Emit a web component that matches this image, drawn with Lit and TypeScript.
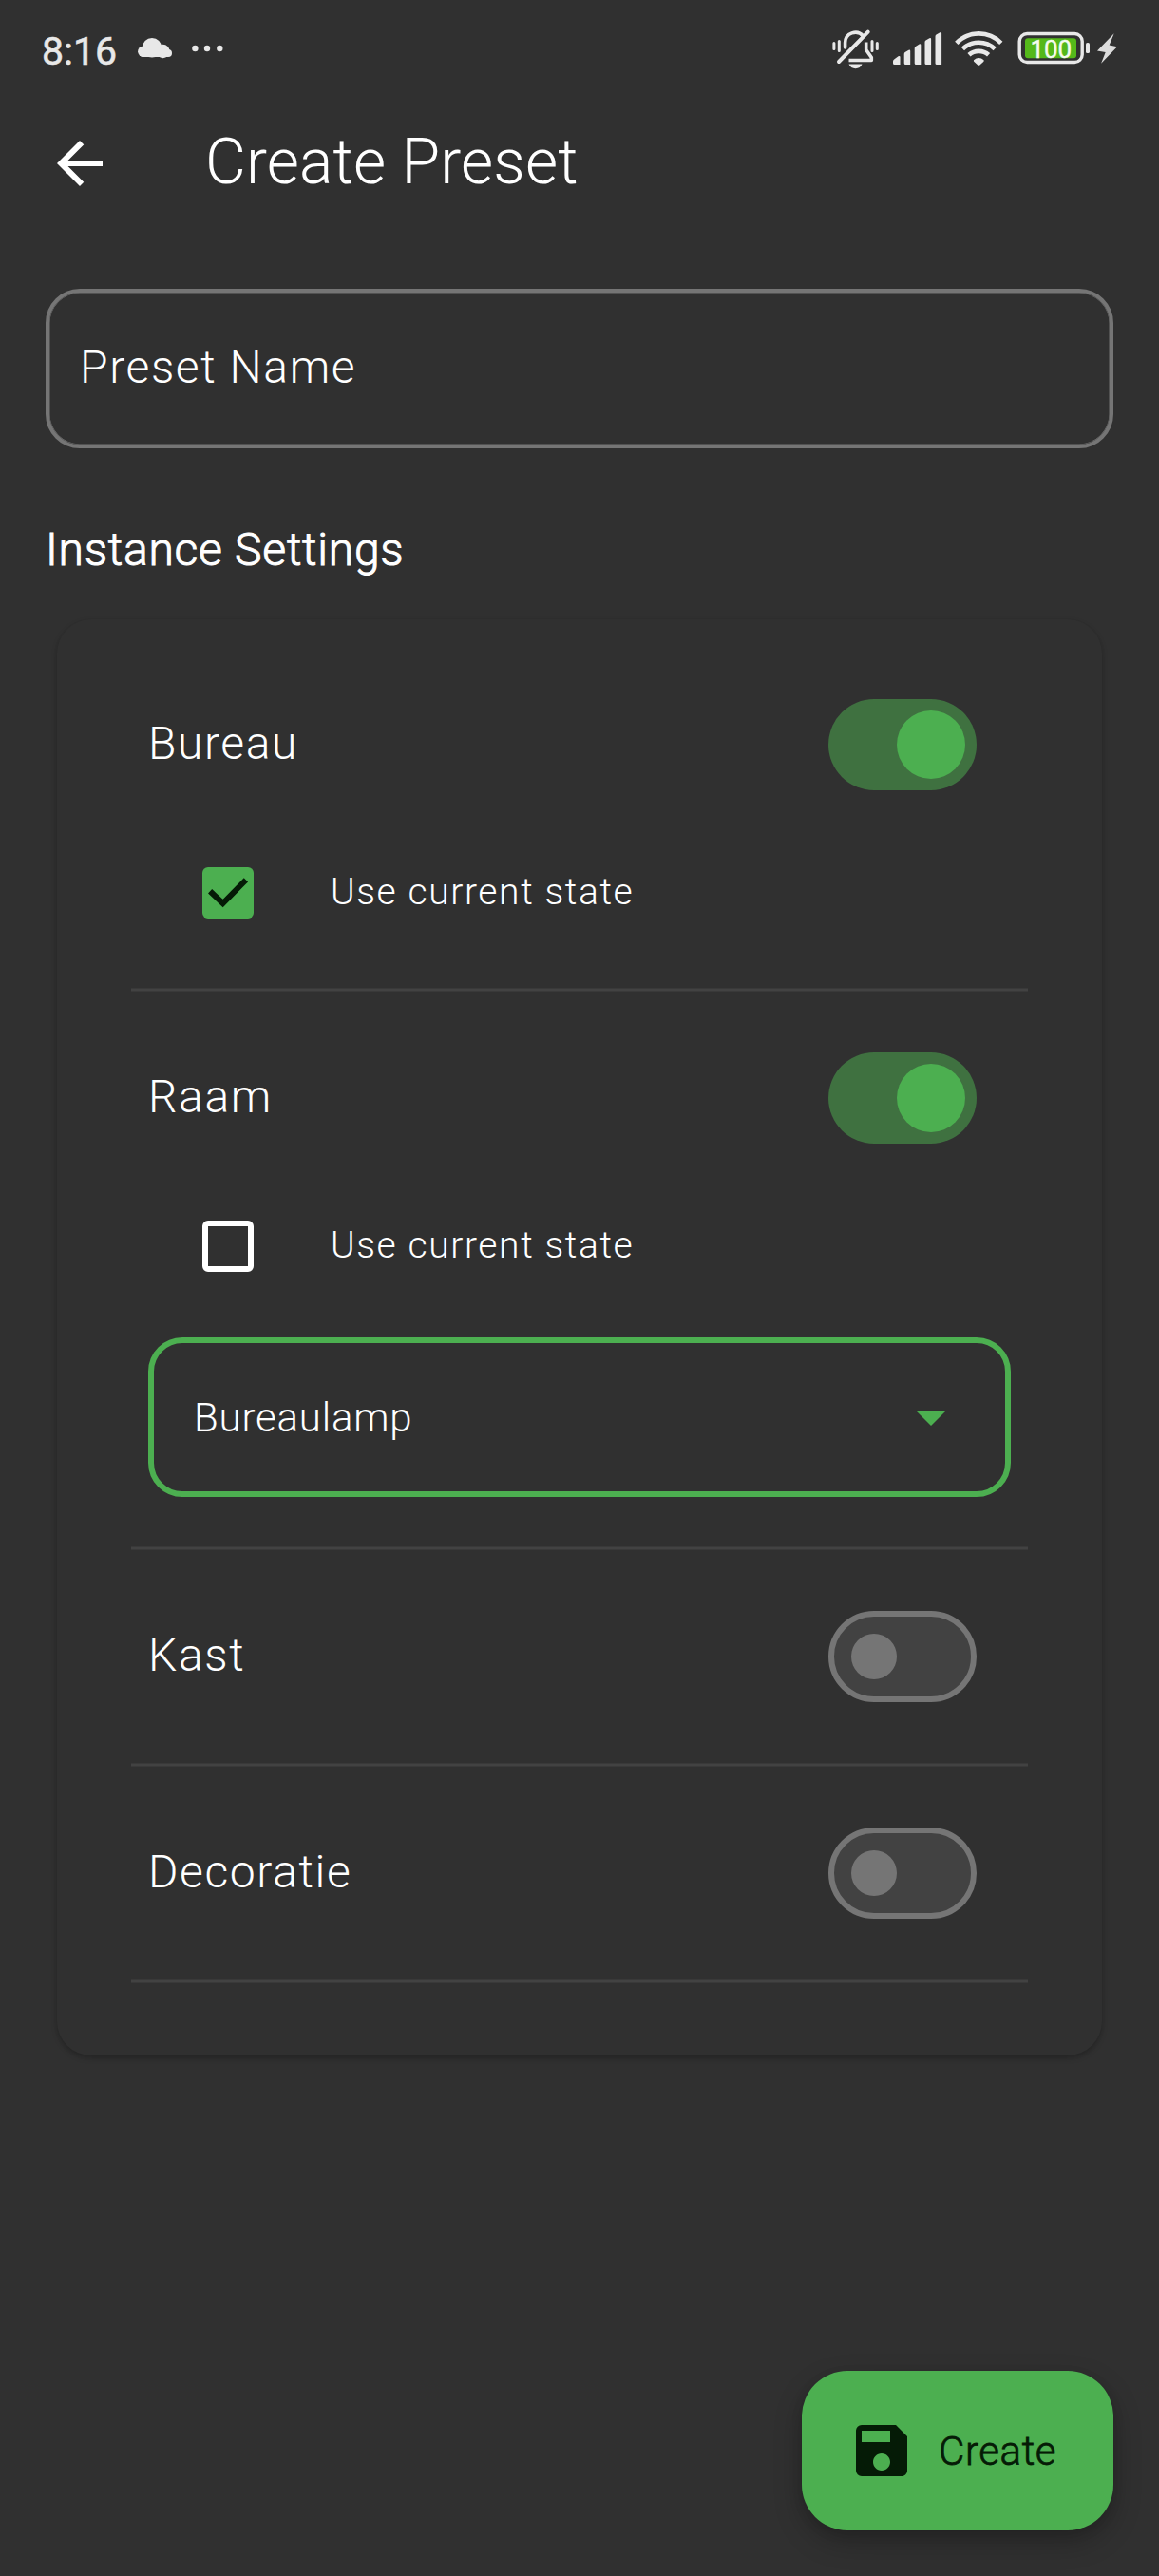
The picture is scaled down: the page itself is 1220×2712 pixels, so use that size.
import { LitElement, html, css, svg, nothing } from "lit";
import { customElement, property, state } from "lit/decorators.js";
import { classMap } from "lit/directives/class-map.js";

interface Instance {
  name: string;
  enabled: boolean;
  useCurrent?: boolean;
  preset?: string;
}

@customElement("status-bar")
class StatusBar extends LitElement {
  static styles = css`
    :host {
      display: flex;
      align-items: flex-start;
      height: 100px;
      padding-left: 44px;
      box-sizing: border-box;
      color: #e8e8e8;
    }
    .time {
      font-size: 41px;
      font-weight: 400;
      line-height: 48px;
      width: 88px;
      margin-top: 30px;
      white-space: nowrap;
      -webkit-text-stroke: 0.6px currentColor;
    }
    svg {
      display: block;
      flex: none;
    }
    .system {
      margin-left: auto;
    }
    .level {
      font-size: 26px;
      font-weight: 400;
      font-family: Roboto, "Liberation Sans", sans-serif;
      stroke: #f4fbef;
      stroke-width: 0.4px;
    }
  `;

  render() {
    return html`
      <div class="time">8:16</div>
      <svg width="120" height="90" viewBox="132 0 120 90">
        <g fill="#e8e8e8">
          <circle cx="160" cy="50.3" r="10.3" />
          <circle cx="150.8" cy="54.2" r="5.7" />
          <circle cx="171.5" cy="54" r="7.2" />
          <rect x="147" y="52" width="34" height="7.9" rx="3.9" />
          <circle cx="205.4" cy="51" r="3.2" />
          <circle cx="218" cy="51" r="3.2" />
          <circle cx="231.3" cy="51" r="3.2" />
        </g>
      </svg>
      <svg class="system" width="360" height="90" viewBox="860 0 360 90">
        <g fill="none" stroke="#e8e8e8" stroke-linecap="round" stroke-linejoin="round">
          <path stroke-width="3.6" d="M889.6 50V45a10.8 10.8 0 0 1 19-7" />
          <path stroke-width="4" d="M913.7 33.6 883 65" />
          <path stroke-width="3.6" stroke-linecap="butt" d="M911.7 44.5V52.5L917.3 60.6V63.5H893.5" />
          <path stroke-width="3" d="M877.9 45.5v6M883.3 43.5v10M918 43.5v10M923.3 45.5v6" />
        </g>
        <path fill="#e8e8e8" d="M893.5 67.6h14c-1.2 3-3.7 4.6-7 4.6s-5.8-1.6-7-4.6z" />
        <g fill="#e8e8e8">
          <path d="M940 64.5q0-1.5 1.5-2.2l4-3q2-.8 2 .7V68h-6q-1.5 0-1.5-1.5z" />
          <path d="M951.7 57q0-1.5 1-2l3.8-2.3q1.7-.6 1.7 1V68h-5q-1.5 0-1.5-1.5z" />
          <path d="M962.7 51q0-1.5 1-2l3.9-2.5q1.7-.6 1.7 1V68h-5.1q-1.5 0-1.5-1.5z" />
          <path d="M973.5 44.5q0-1.5 1-2l3.9-2.3q1.7-.6 1.7 1V68h-5.1q-1.5 0-1.5-1.5z" />
          <path d="M984.5 38.5q0-1.5 1-2l3.9-2.3q1.7-.6 1.7 1V68h-5.1q-1.5 0-1.5-1.5z" />
        </g>
        <g fill="none" stroke="#e8e8e8" stroke-width="4.7">
          <path d="M1006.8 45.3a33 33 0 0 1 47 0" />
          <path d="M1013.4 51.5a24.5 24.5 0 0 1 33.8 0" />
          <path d="M1020 57.7a15.5 15.5 0 0 1 20.6 0" />
        </g>
        <path fill="#e8e8e8" d="M1025 63.2q5.3-4.4 10.6 0 .4 1-.4 1.7l-3.6 3.4q-1.3 1-2.6 0l-3.6-3.4q-.8-.7-.4-1.7z" />
        <rect x="1073.2" y="35.5" width="66" height="30" rx="8" fill="none" stroke="#e8e8e8" stroke-width="3.4" />
        <rect x="1079" y="40.3" width="54" height="21" rx="3" fill="#54b81a" />
        <rect x="1143" y="45" width="4" height="11" rx="1.6" fill="#e8e8e8" />
        <text class="level" x="1106.3" y="61.3" text-anchor="middle" fill="#f4fbef">100</text>
        <path fill="#dcdcdc" d="M1172.7 35.3 1155 53.5l8.7 1.5-4.6 11.8L1176 49.2l-8.3-1.7z" />
      </svg>
    `;
  }
}

@customElement("toggle-switch")
class ToggleSwitch extends LitElement {
  @property({ type: Boolean }) on = false;

  static styles = css`
    :host {
      display: block;
      flex: none;
    }
    .track {
      display: flex;
      align-items: center;
      box-sizing: border-box;
      width: 156px;
      height: 96px;
      border-radius: 48px;
      border: 6px solid #757575;
      background: #424242;
      padding: 0 18px;
    }
    .thumb {
      width: 48px;
      height: 48px;
      border-radius: 50%;
      background: #757575;
    }
    .on {
      justify-content: flex-end;
      border: none;
      background: #3f7140;
      padding: 0 12px;
    }
    .on .thumb {
      width: 72px;
      height: 72px;
      background: #4caf50;
    }
  `;

  render() {
    return html`<div class=${classMap({ track: true, on: this.on })}><div class="thumb"></div></div>`;
  }
}

@customElement("instance-row")
class InstanceRow extends LitElement {
  @property({ attribute: false }) instance!: Instance;

  static styles = css`
    :host {
      display: block;
    }
    .head {
      display: flex;
      align-items: center;
      justify-content: space-between;
      height: 180px;
      padding: 0 54px 0 18px;
    }
    .name {
      font-size: 48px;
      line-height: 56px;
      letter-spacing: 1.6px;
      padding-bottom: 2px;
    }
    .current {
      display: flex;
      align-items: center;
      height: 132px;
      padding-left: 75px;
    }
    .box {
      box-sizing: border-box;
      width: 54px;
      height: 54px;
      border: 6px solid #fff;
      border-radius: 6px;
      margin-right: 81px;
    }
    .checked {
      border: none;
      background: #4caf50;
    }
    .box svg {
      display: block;
    }
    .label {
      font-size: 39px;
      line-height: 46px;
      letter-spacing: 1.6px;
      padding-bottom: 3px;
    }
    .select {
      display: flex;
      align-items: center;
      justify-content: space-between;
      box-sizing: border-box;
      height: 168px;
      margin: 30px 18px 30px;
      padding: 0 63px 0 42px;
      border: 6px solid #4caf50;
      border-radius: 36px;
      font-size: 42px;
      line-height: 50px;
      letter-spacing: 0.8px;
    }
    .select span {
      padding-top: 2px;
    }
    .select svg {
      display: block;
      margin-top: 3px;
    }
    .gap {
      height: 12px;
    }
    .rule {
      display: flex;
      align-items: center;
      height: 48px;
    }
    .line {
      flex: 1;
      height: 4px;
      background: linear-gradient(#393939 1px, #424242 1px 3px, #393939 3px);
    }
  `;

  render() {
    const { name, enabled, useCurrent, preset } = this.instance;
    return html`
      <div class="head">
        <span class="name">${name}</span>
        <toggle-switch .on=${enabled}></toggle-switch>
      </div>
      ${enabled
        ? html`<div class="current">
            <div class=${classMap({ box: true, checked: !!useCurrent })}>
              ${useCurrent
                ? svg`<svg width="54" height="54" viewBox="0 0 54 54"><path d="M8.1 25.2 21.6 38 45.9 13.3" fill="none" stroke="#051b06" stroke-width="6"/></svg>`
                : nothing}
            </div>
            <span class="label">Use current state</span>
          </div>`
        : nothing}
      ${preset
        ? html`<div class="select">
            <span>${preset}</span>
            <svg width="30" height="15" viewBox="0 0 30 15"><path d="M0 0h30L15 15z" fill="#4caf50" /></svg>
          </div>`
        : enabled
          ? html`<div class="gap"></div>`
          : nothing}
      <div class="rule"><div class="line"></div></div>
    `;
  }
}

@customElement("app-root")
class AppRoot extends LitElement {
  @state() private instances: Instance[] = [
    { name: "Bureau", enabled: true, useCurrent: true },
    { name: "Raam", enabled: true, useCurrent: false, preset: "Bureaulamp" },
    { name: "Kast", enabled: false },
    { name: "Decoratie", enabled: false },
  ];

  static styles = css`
    :host {
      display: flex;
      flex-direction: column;
      box-sizing: border-box;
      width: 1220px;
      height: 2712px;
      overflow: hidden;
      background: #303030;
      color: #fff;
      font-family: Roboto, "Liberation Sans", sans-serif;
      font-weight: 300;
    }
    .bar {
      display: flex;
      align-items: center;
      height: 144px;
      padding-left: 48px;
      gap: 96px;
    }
    .bar svg {
      display: block;
    }
    .title {
      margin: 0;
      font-size: 66px;
      line-height: 78px;
      font-weight: 300;
      letter-spacing: 0.15px;
      padding-bottom: 3px;
    }
    .field {
      display: flex;
      align-items: center;
      box-sizing: border-box;
      height: 168px;
      margin: 60px 48px 0;
      padding: 0 32px 2px;
      border: 4px solid #757575;
      box-shadow: inset 0 0 0 0.5px #757575;
      border-radius: 36px;
      font-size: 48px;
      line-height: 56px;
      letter-spacing: 1.6px;
    }
    .section {
      margin: 79px 48px 0;
      font-size: 48px;
      line-height: 56px;
      letter-spacing: 0.75px;
      -webkit-text-stroke: 1px currentColor;
    }
    .card {
      box-sizing: border-box;
      height: 1512px;
      margin: 45px 60px 0;
      padding: 42px 78px 0;
      border-radius: 36px;
      background: #303030;
      box-shadow: 0 3px 6px rgba(0, 0, 0, 0.2), 0 2px 4px rgba(0, 0, 0, 0.06);
    }
    .create {
      display: flex;
      align-items: center;
      align-self: flex-end;
      box-sizing: border-box;
      width: 328px;
      height: 168px;
      margin: auto 48px 48px 0;
      padding-left: 48px;
      gap: 24px;
      border-radius: 48px;
      background: #4caf50;
      color: #051b06;
      font-size: 42px;
      line-height: 50px;
      letter-spacing: 0.6px;
      box-shadow: 0 12px 30px rgba(0, 0, 0, 0.24), 0 4px 12px rgba(0, 0, 0, 0.1);
    }
    .create span {
      padding-top: 1px;
      -webkit-text-stroke: 0.8px currentColor;
    }
  `;

  render() {
    return html`
      <status-bar></status-bar>
      <header class="bar">
        <svg width="72" height="72" viewBox="0 0 24 24">
          <path fill="#fff" d="M20 11H7.83l5.59-5.59L12 4l-8 8 8 8 1.41-1.41L7.83 13H20z" />
        </svg>
        <h1 class="title">Create Preset</h1>
      </header>
      <div class="field">Preset Name</div>
      <div class="section">Instance Settings</div>
      <div class="card">
        ${this.instances.map((i) => html`<instance-row .instance=${i}></instance-row>`)}
      </div>
      <div class="create">
        <svg width="72" height="72" viewBox="0 0 24 24">
          <path
            fill="#051b06"
            d="M17 3H5a2 2 0 0 0-2 2v14a2 2 0 0 0 2 2h14c1.1 0 2-.9 2-2V7zm-5 16c-1.66 0-3-1.34-3-3s1.34-3 3-3 3 1.34 3 3-1.34 3-3 3zm3-10H5V5h10z"
          />
        </svg>
        <span>Create</span>
      </div>
    `;
  }
}
